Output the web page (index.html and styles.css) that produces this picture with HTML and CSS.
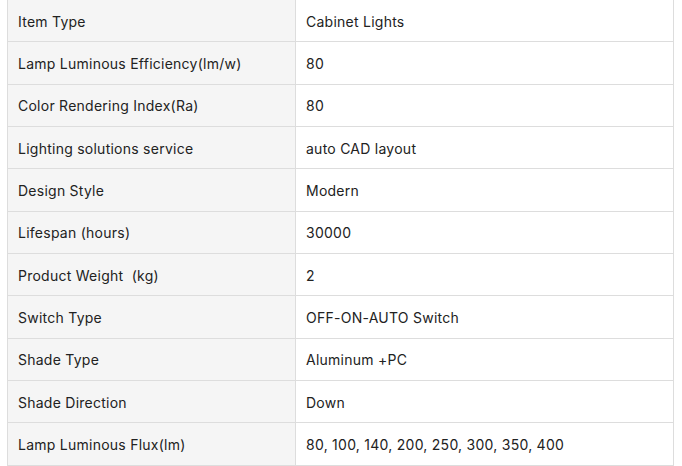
FILE: index.html
```html
<!DOCTYPE html>
<html>
<head>
<meta charset="utf-8">
<link rel="stylesheet" href="styles.css">
</head>
<body>
<div class="spec">
  <div class="k">Item Type</div><div class="v">Cabinet Lights</div>
  <div class="k">Lamp Luminous Efficiency(lm/w)</div><div class="v">80</div>
  <div class="k">Color Rendering Index(Ra)</div><div class="v">80</div>
  <div class="k">Lighting solutions service</div><div class="v">auto CAD layout</div>
  <div class="k">Design Style</div><div class="v">Modern</div>
  <div class="k">Lifespan (hours)</div><div class="v">30000</div>
  <div class="k">Product Weight &nbsp;(kg)</div><div class="v">2</div>
  <div class="k">Switch Type</div><div class="v">OFF-ON-AUTO Switch</div>
  <div class="k">Shade Type</div><div class="v">Aluminum +PC</div>
  <div class="k">Shade Direction</div><div class="v">Down</div>
  <div class="k">Lamp Luminous Flux(lm)</div><div class="v">80, 100, 140, 200, 250, 300, 350, 400</div>
</div>
</body>
</html>
```
FILE: styles.css
```css
html, body {
  margin: 0;
  padding: 0;
  background: #fff;
}
body {
  font-family: Inter, "Noto Sans", sans-serif;
  font-size: 14px;
  letter-spacing: 0.25px;
  color: #222;
}
.spec {
  display: grid;
  grid-template-columns: 288px 1fr;
  grid-auto-rows: 42.33px;
  width: 667px;
  box-sizing: border-box;
  margin-left: 7px;
  border-left: 1px solid #dddddd;
  border-right: 1px solid #dddddd;
}
.k, .v {
  display: flex;
  align-items: center;
  box-sizing: border-box;
  padding: 1px 10px 0;
  border-bottom: 1px solid #dddddd;
  white-space: nowrap;
}
.k {
  background: #f5f5f5;
  border-right: 1px solid #dddddd;
}
.v {
  background: #fff;
}
```
